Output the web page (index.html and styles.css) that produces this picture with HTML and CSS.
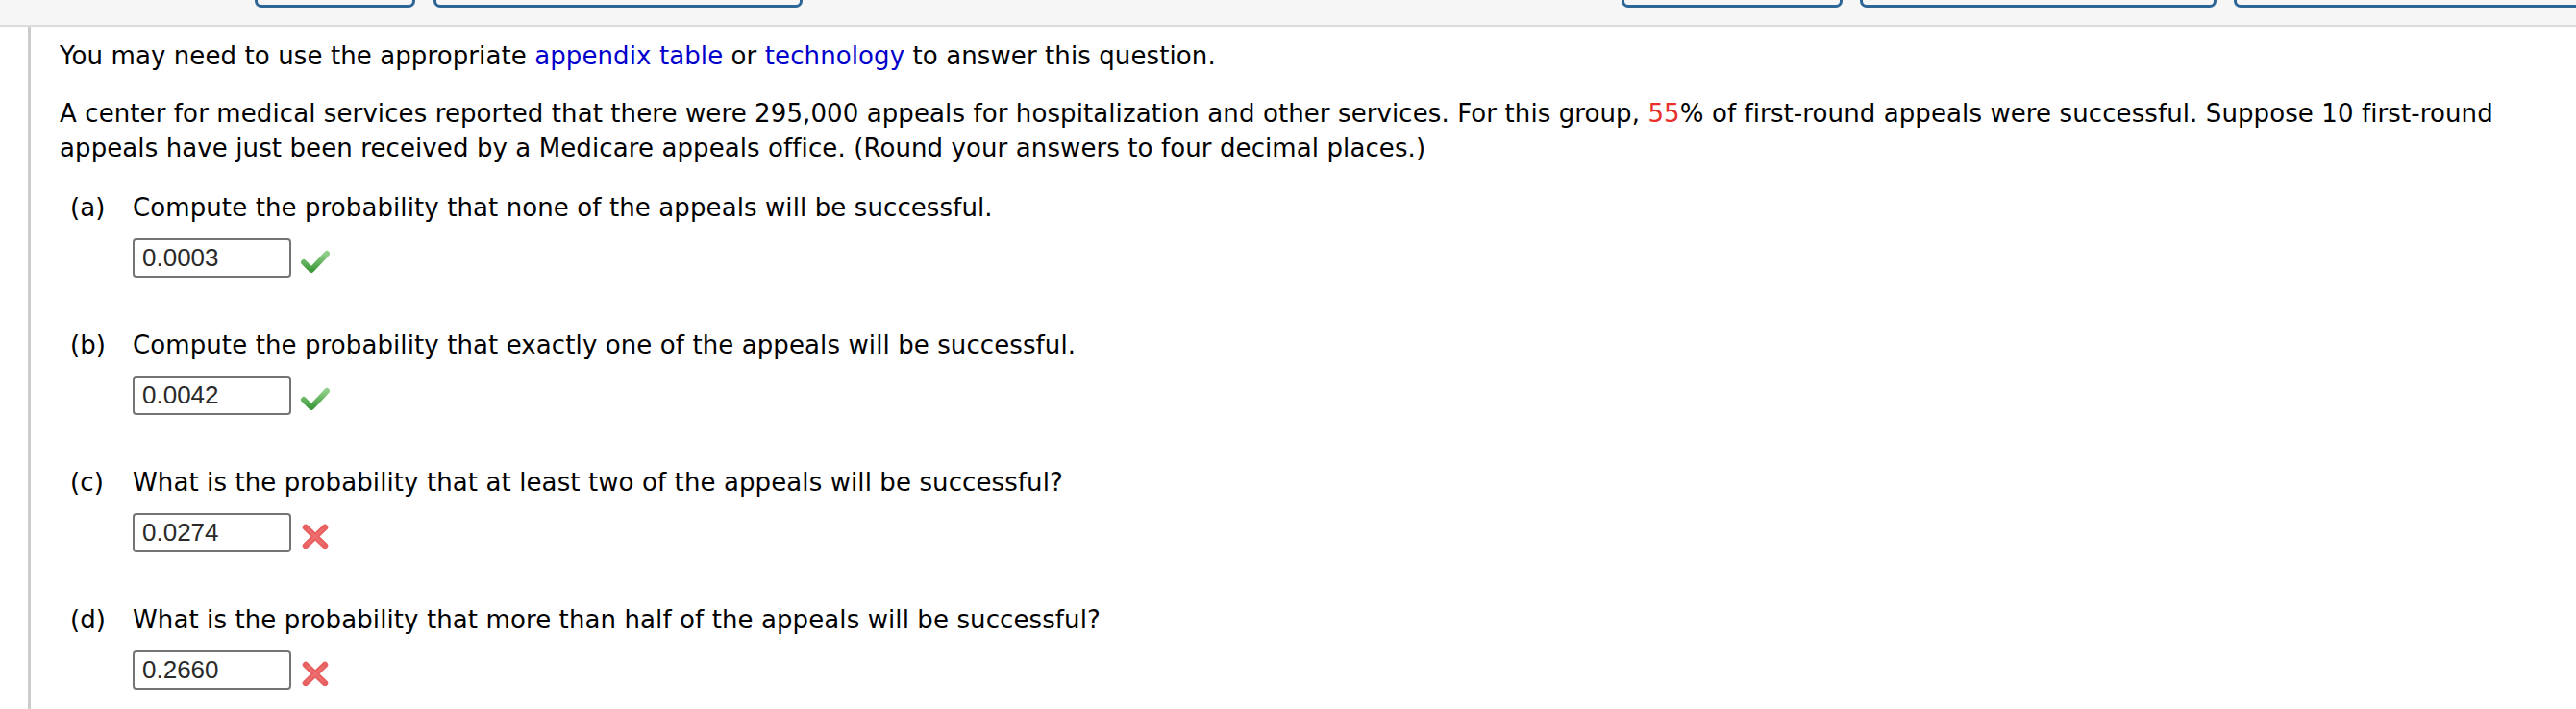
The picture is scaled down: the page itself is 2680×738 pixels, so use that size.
FILE: index.html
```html
<!DOCTYPE html>
<html>
<head>
<meta charset="utf-8">
<link rel="stylesheet" href="styles.css">
</head>
<body>
<div class="topbar">
  <div class="btns btns-left">
    <span class="tab tab1"></span>
    <span class="tab tab2"></span>
  </div>
  <div class="btns btns-right">
    <span class="tab tab3"></span>
    <span class="tab tab4"></span>
    <span class="tab tab5"></span>
  </div>
</div>
<div class="main">
  <p class="intro">You may need to use the appropriate <span class="lnk">appendix table</span> or <span class="lnk">technology</span> to answer this question.</p>
  <p class="problem">A center for medical services reported that there were 295,000 appeals for hospitalization and other services. For this group, <span class="red">55</span>% of first-round appeals were successful. Suppose 10 first-round appeals have just been received by a Medicare appeals office. (Round your answers to four decimal places.)</p>

  <div class="part">
    <div class="qrow"><span class="lbl">(a)</span><span class="qtext">Compute the probability that none of the appeals will be successful.</span></div>
    <div class="arow"><span class="ans">0.0003</span>
      <svg class="mark" width="32" height="26" viewBox="0 0 32 26"><defs><linearGradient id="g1" x1="0" y1="0" x2="0" y2="1"><stop offset="0" stop-color="#8fd088"/><stop offset="1" stop-color="#3f9a3c"/></linearGradient></defs><polyline points="4,14 12,22 28,5" fill="none" stroke="url(#g1)" stroke-width="6" stroke-linecap="round" stroke-linejoin="round"/></svg>
    </div>
  </div>

  <div class="part">
    <div class="qrow"><span class="lbl">(b)</span><span class="qtext">Compute the probability that exactly one of the appeals will be successful.</span></div>
    <div class="arow"><span class="ans">0.0042</span>
      <svg class="mark" width="32" height="26" viewBox="0 0 32 26"><defs><linearGradient id="g2" x1="0" y1="0" x2="0" y2="1"><stop offset="0" stop-color="#8fd088"/><stop offset="1" stop-color="#3f9a3c"/></linearGradient></defs><polyline points="4,14 12,22 28,5" fill="none" stroke="url(#g2)" stroke-width="6" stroke-linecap="round" stroke-linejoin="round"/></svg>
    </div>
  </div>

  <div class="part">
    <div class="qrow"><span class="lbl">(c)</span><span class="qtext">What is the probability that at least two of the appeals will be successful?</span></div>
    <div class="arow"><span class="ans">0.0274</span>
      <svg class="mark" width="32" height="26" viewBox="0 0 32 26"><path d="M6,4 L26,23 M26,4 L6,23" fill="none" stroke="#e86060" stroke-width="6.5" stroke-linecap="round"/><path d="M8,6 L24,21 M24,6 L8,21" fill="none" stroke="#f07a7a" stroke-width="2" stroke-linecap="round" opacity="0.6"/></svg>
    </div>
  </div>

  <div class="part">
    <div class="qrow"><span class="lbl">(d)</span><span class="qtext">What is the probability that more than half of the appeals will be successful?</span></div>
    <div class="arow"><span class="ans">0.2660</span>
      <svg class="mark" width="32" height="26" viewBox="0 0 32 26"><path d="M6,4 L26,23 M26,4 L6,23" fill="none" stroke="#e86060" stroke-width="6.5" stroke-linecap="round"/><path d="M8,6 L24,21 M24,6 L8,21" fill="none" stroke="#f07a7a" stroke-width="2" stroke-linecap="round" opacity="0.6"/></svg>
    </div>
  </div>
</div>
</body>
</html>
```

FILE: styles.css
```css
html, body {
  margin: 0;
  padding: 0;
  background: #ffffff;
  overflow: hidden;
}
body {
  font-family: "DejaVu Sans", Verdana, sans-serif;
  font-size: 26px;
  letter-spacing: 0.1px;
  color: #000;
}
.topbar {
  height: 26px;
  background: #f6f6f6;
  border-bottom: 2px solid #dcdcdc;
  display: flex;
  align-items: flex-start;
  overflow: hidden;
}
.btns {
  display: flex;
  gap: 19px;
}
.btns-left {
  margin-left: 265px;
}
.btns-right {
  margin-left: 852px;
  gap: 18px;
}
.tab {
  display: block;
  height: 5px;
  border: 3px solid #2d6597;
  border-top: none;
  border-radius: 0 0 7px 7px;
  flex: none;
}
.tab1 { width: 161px; }
.tab2 { width: 378px; }
.tab3 { width: 224px; }
.tab4 { width: 365px; }
.tab5 { width: 400px; }

.main {
  margin-left: 29px;
  border-left: 3px solid #cccccc;
  padding: 12px 0 40px 30px;
}
p {
  margin: 0;
  line-height: 36px;
}
.intro {
  margin-bottom: 24px;
}
.problem {
  margin-bottom: 26px;
  width: 2580px;
}
.lnk {
  color: #0000cc;
}
.red {
  color: #e8302a;
}
.part {
  padding-left: 11px;
  margin-bottom: 52px;
}
.qrow {
  display: flex;
  line-height: 36px;
}
.lbl {
  width: 65px;
  flex: none;
}
.arow {
  margin-top: 14px;
  margin-left: 65px;
  display: flex;
  align-items: center;
  gap: 9px;
}
.ans {
  box-sizing: border-box;
  width: 165px;
  height: 41px;
  border: 2px solid #747474;
  border-radius: 4px;
  padding-left: 8px;
  font-family: "Liberation Sans", Arial, sans-serif;
  font-size: 26px;
  letter-spacing: 0;
  line-height: 37px;
  color: #2a2a2a;
}
.mark {
  margin-top: 6px;
}
```
